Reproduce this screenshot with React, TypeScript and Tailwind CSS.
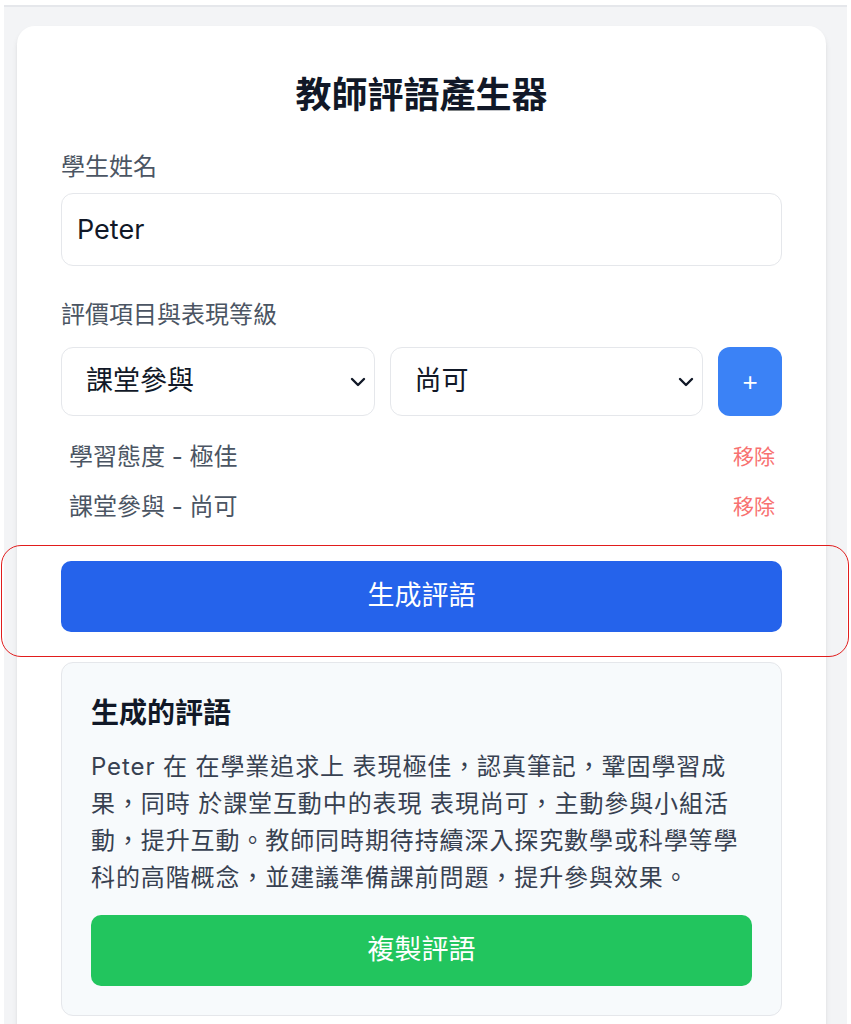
import React from 'react';

const items = [
  { id: 1, label: '學習態度 - 極佳' },
  { id: 2, label: '課堂參與 - 尚可' },
];

function Chevron() {
  return (
    <svg
      className="pointer-events-none absolute right-[9px] top-1/2 -translate-y-1/2"
      width="16"
      height="10"
      viewBox="0 0 16 10"
      fill="none"
    >
      <path d="M2 2l6 6 6-6" stroke="#111827" strokeWidth="2.4" strokeLinecap="round" strokeLinejoin="round" />
    </svg>
  );
}

function SelectBox({ value, options }: { value: string; options: string[] }) {
  return (
    <div className="relative flex-1">
      <select
        defaultValue={value}
        className="appearance-none w-full h-[69px] bg-white border border-[#e5e7eb] rounded-[12px] pl-[24px] pr-10 text-[27px] text-[#111827] outline-none"
      >
        {options.map((o) => (
          <option key={o} value={o}>{o}</option>
        ))}
      </select>
      <Chevron />
    </div>
  );
}

export default function App() {
  return (
    <div
      className="relative min-h-screen bg-white px-[4px] overflow-hidden"
      style={{ fontFamily: 'Inter, "Noto Sans CJK TC", sans-serif' }}
    >
      <div className="mt-[5px] border-t-2 border-[#e5e7eb] bg-[#f3f4f6] pt-[19px] pl-[13px] pr-[21px] min-h-[1100px]">
        {/* Main card */}
        <div className="bg-white rounded-t-[18px] shadow-md px-[44px] pt-[42px] pb-10 min-h-[1100px]">
          <h1 className="text-center text-[36px] leading-[54px] font-bold text-[#111827]">教師評語產生器</h1>

          <label className="block mt-[27px] text-[24px] leading-[36px] text-[#4b5563]">學生姓名</label>
          <input
            defaultValue="Peter"
            className="mt-[8px] w-full h-[73px] border border-[#e5e7eb] rounded-[12px] px-[15px] text-[27px] text-[#111827] outline-none"
          />

          <label className="block mt-[31px] text-[24px] leading-[36px] text-[#4b5563]">評價項目與表現等級</label>
          <div className="mt-[14px] flex gap-[15px]">
            <SelectBox value="課堂參與" options={['學習態度', '課堂參與', '作業完成']} />
            <SelectBox value="尚可" options={['極佳', '良好', '尚可', '待改進']} />
            <button className="w-[64px] h-[69px] shrink-0 bg-[#3b82f6] rounded-[12px] text-white text-[26px] leading-none flex items-center justify-center" style={{ fontFamily: '"Liberation Sans", sans-serif' }}>
              +
            </button>
          </div>

          <ul className="mt-[16px]">
            {items.map((item) => (
              <li key={item.id} className="flex items-center justify-between h-[50px] pl-[8px] pr-[7px]">
                <span className="text-[24px] text-[#4b5563]">{item.label}</span>
                <button className="text-[21px] text-[#f87171]">移除</button>
              </li>
            ))}
          </ul>

          <button className="mt-[29px] w-full h-[71px] bg-[#2563eb] rounded-[10px] text-white text-[27px]">生成評語</button>

          {/* Result */}
          <div className="mt-[30px] bg-[#f7fafc] border border-[#e5e7eb] rounded-[12px] px-[29px] pt-[29px] pb-[29px]">
            <h2 className="text-[28px] leading-[42px] font-bold text-[#111827]">生成的評語</h2>
            <p className="mt-[14px] text-[24px] leading-[37px] tracking-[0.9px] whitespace-nowrap text-[#374151]">
              Peter 在 在學業追求上 表現極佳，認真筆記，鞏固學習成<br />
              果，同時 於課堂互動中的表現 表現尚可，主動參與小組活<br />
              動，提升互動。教師同時期待持續深入探究數學或科學等學<br />
              科的高階概念，並建議準備課前問題，提升參與效果。
            </p>
            <button className="mt-[19px] w-full h-[71px] bg-[#22c55e] rounded-[10px] text-white text-[27px]">複製評語</button>
          </div>
        </div>
      </div>

      {/* Annotation outline */}
      <div className="pointer-events-none absolute left-[1px] top-[545px] w-[848px] h-[112px] border-[1.5px] border-[#e11d1d] rounded-[20px]" />
    </div>
  );
}
